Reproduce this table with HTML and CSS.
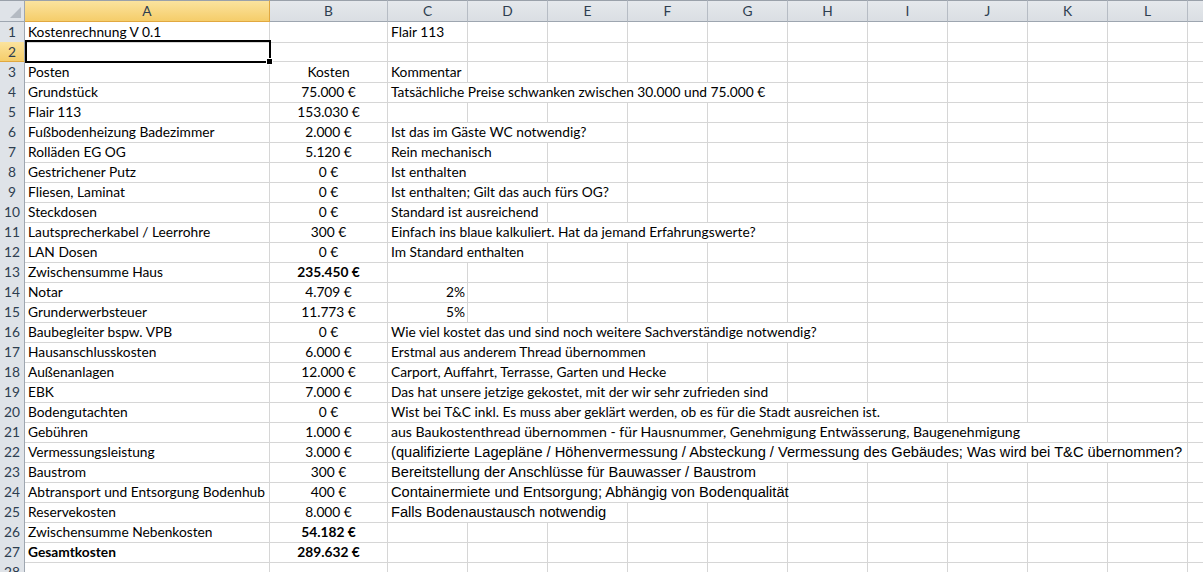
FILE: index.html
```html
<!DOCTYPE html>
<html lang="de">
<head>
<meta charset="utf-8">
<title>Kostenrechnung</title>
<link rel="stylesheet" href="styles.css">
</head>
<body>
<div class="sheet">
  <div class="row hdr">
    <div class="corner"><span class="tri"></span></div>
    <div class="ch sel">A</div><div class="ch">B</div><div class="ch">C</div><div class="ch">D</div><div class="ch">E</div><div class="ch">F</div><div class="ch">G</div><div class="ch">H</div><div class="ch">I</div><div class="ch">J</div><div class="ch">K</div><div class="ch">L</div><div class="ch">M</div>
  </div>

  <div class="row"><div class="rh">1</div><div class="c">Kostenrechnung V 0.1</div><div class="c"></div><div class="c">Flair 113</div><div class="c"></div><div class="c"></div><div class="c"></div><div class="c"></div><div class="c"></div><div class="c"></div><div class="c"></div><div class="c"></div><div class="c"></div><div class="c"></div></div>
  <div class="row"><div class="rh sel">2</div><div class="c active"><span class="selbox"><span class="handle"></span></span></div><div class="c"></div><div class="c"></div><div class="c"></div><div class="c"></div><div class="c"></div><div class="c"></div><div class="c"></div><div class="c"></div><div class="c"></div><div class="c"></div><div class="c"></div><div class="c"></div></div>
  <div class="row"><div class="rh">3</div><div class="c">Posten</div><div class="c num">Kosten</div><div class="c">Kommentar</div><div class="c"></div><div class="c"></div><div class="c"></div><div class="c"></div><div class="c"></div><div class="c"></div><div class="c"></div><div class="c"></div><div class="c"></div><div class="c"></div></div>
  <div class="row"><div class="rh">4</div><div class="c">Grundstück</div><div class="c num">75.000 €</div><div class="c s5">Tatsächliche Preise schwanken zwischen 30.000 und 75.000 €</div><div class="c"></div><div class="c"></div><div class="c"></div><div class="c"></div><div class="c"></div><div class="c"></div></div>
  <div class="row"><div class="rh">5</div><div class="c">Flair 113</div><div class="c num">153.030 €</div><div class="c"></div><div class="c"></div><div class="c"></div><div class="c"></div><div class="c"></div><div class="c"></div><div class="c"></div><div class="c"></div><div class="c"></div><div class="c"></div><div class="c"></div></div>
  <div class="row"><div class="rh">6</div><div class="c">Fußbodenheizung Badezimmer</div><div class="c num">2.000 €</div><div class="c s3">Ist das im Gäste WC notwendig?</div><div class="c"></div><div class="c"></div><div class="c"></div><div class="c"></div><div class="c"></div><div class="c"></div><div class="c"></div><div class="c"></div></div>
  <div class="row"><div class="rh">7</div><div class="c">Rolläden EG OG</div><div class="c num">5.120 €</div><div class="c s2">Rein mechanisch</div><div class="c"></div><div class="c"></div><div class="c"></div><div class="c"></div><div class="c"></div><div class="c"></div><div class="c"></div><div class="c"></div><div class="c"></div></div>
  <div class="row"><div class="rh">8</div><div class="c">Gestrichener Putz</div><div class="c num">0 €</div><div class="c s2">Ist enthalten</div><div class="c"></div><div class="c"></div><div class="c"></div><div class="c"></div><div class="c"></div><div class="c"></div><div class="c"></div><div class="c"></div><div class="c"></div></div>
  <div class="row"><div class="rh">9</div><div class="c">Fliesen, Laminat</div><div class="c num">0 €</div><div class="c s3">Ist enthalten; Gilt das auch fürs OG?</div><div class="c"></div><div class="c"></div><div class="c"></div><div class="c"></div><div class="c"></div><div class="c"></div><div class="c"></div><div class="c"></div></div>
  <div class="row"><div class="rh">10</div><div class="c">Steckdosen</div><div class="c num">0 €</div><div class="c s2">Standard ist ausreichend</div><div class="c"></div><div class="c"></div><div class="c"></div><div class="c"></div><div class="c"></div><div class="c"></div><div class="c"></div><div class="c"></div><div class="c"></div></div>
  <div class="row"><div class="rh">11</div><div class="c">Lautsprecherkabel / Leerrohre</div><div class="c num">300 €</div><div class="c s5">Einfach ins blaue kalkuliert. Hat da jemand Erfahrungswerte?</div><div class="c"></div><div class="c"></div><div class="c"></div><div class="c"></div><div class="c"></div><div class="c"></div></div>
  <div class="row"><div class="rh">12</div><div class="c">LAN Dosen</div><div class="c num">0 €</div><div class="c s2">Im Standard enthalten</div><div class="c"></div><div class="c"></div><div class="c"></div><div class="c"></div><div class="c"></div><div class="c"></div><div class="c"></div><div class="c"></div><div class="c"></div></div>
  <div class="row"><div class="rh">13</div><div class="c">Zwischensumme Haus</div><div class="c num bold">235.450 €</div><div class="c"></div><div class="c"></div><div class="c"></div><div class="c"></div><div class="c"></div><div class="c"></div><div class="c"></div><div class="c"></div><div class="c"></div><div class="c"></div><div class="c"></div></div>
  <div class="row"><div class="rh">14</div><div class="c">Notar</div><div class="c num">4.709 €</div><div class="c right">2%</div><div class="c"></div><div class="c"></div><div class="c"></div><div class="c"></div><div class="c"></div><div class="c"></div><div class="c"></div><div class="c"></div><div class="c"></div><div class="c"></div></div>
  <div class="row"><div class="rh">15</div><div class="c">Grunderwerbsteuer</div><div class="c num">11.773 €</div><div class="c right">5%</div><div class="c"></div><div class="c"></div><div class="c"></div><div class="c"></div><div class="c"></div><div class="c"></div><div class="c"></div><div class="c"></div><div class="c"></div><div class="c"></div></div>
  <div class="row"><div class="rh">16</div><div class="c">Baubegleiter bspw. VPB</div><div class="c num">0 €</div><div class="c s6">Wie viel kostet das und sind noch weitere Sachverständige notwendig?</div><div class="c"></div><div class="c"></div><div class="c"></div><div class="c"></div><div class="c"></div></div>
  <div class="row"><div class="rh">17</div><div class="c">Hausanschlusskosten</div><div class="c num">6.000 €</div><div class="c s4">Erstmal aus anderem Thread übernommen</div><div class="c"></div><div class="c"></div><div class="c"></div><div class="c"></div><div class="c"></div><div class="c"></div><div class="c"></div></div>
  <div class="row"><div class="rh">18</div><div class="c">Außenanlagen</div><div class="c num">12.000 €</div><div class="c s4">Carport, Auffahrt, Terrasse, Garten und Hecke</div><div class="c"></div><div class="c"></div><div class="c"></div><div class="c"></div><div class="c"></div><div class="c"></div><div class="c"></div></div>
  <div class="row"><div class="rh">19</div><div class="c">EBK</div><div class="c num">7.000 €</div><div class="c s5">Das hat unsere jetzige gekostet, mit der wir sehr zufrieden sind</div><div class="c"></div><div class="c"></div><div class="c"></div><div class="c"></div><div class="c"></div><div class="c"></div></div>
  <div class="row"><div class="rh">20</div><div class="c">Bodengutachten</div><div class="c num">0 €</div><div class="c s7">Wist bei T&amp;C inkl. Es muss aber geklärt werden, ob es für die Stadt ausreichen ist.</div><div class="c"></div><div class="c"></div><div class="c"></div><div class="c"></div></div>
  <div class="row"><div class="rh">21</div><div class="c">Gebühren</div><div class="c num">1.000 €</div><div class="c s9 small">aus Baukostenthread übernommen - für Hausnummer, Genehmigung Entwässerung, Baugenehmigung</div><div class="c"></div><div class="c"></div></div>
  <div class="row"><div class="rh">22</div><div class="c">Vermessungsleistung</div><div class="c num">3.000 €</div><div class="c s10 arial">(qualifizierte Lagepläne / Höhenvermessung / Absteckung / Vermessung des Gebäudes; Was wird bei T&amp;C übernommen?</div><div class="c"></div></div>
  <div class="row"><div class="rh">23</div><div class="c">Baustrom</div><div class="c num">300 €</div><div class="c s5 arial">Bereitstellung der Anschlüsse für Bauwasser / Baustrom</div><div class="c"></div><div class="c"></div><div class="c"></div><div class="c"></div><div class="c"></div><div class="c"></div></div>
  <div class="row"><div class="rh">24</div><div class="c">Abtransport und Entsorgung Bodenhub</div><div class="c num">400 €</div><div class="c s5 arial">Containermiete und Entsorgung; Abhängig von Bodenqualität</div><div class="c"></div><div class="c"></div><div class="c"></div><div class="c"></div><div class="c"></div><div class="c"></div></div>
  <div class="row"><div class="rh">25</div><div class="c">Reservekosten</div><div class="c num">8.000 €</div><div class="c s3 arial">Falls Bodenaustausch notwendig</div><div class="c"></div><div class="c"></div><div class="c"></div><div class="c"></div><div class="c"></div><div class="c"></div><div class="c"></div><div class="c"></div></div>
  <div class="row"><div class="rh">26</div><div class="c">Zwischensumme Nebenkosten</div><div class="c num bold">54.182 €</div><div class="c"></div><div class="c"></div><div class="c"></div><div class="c"></div><div class="c"></div><div class="c"></div><div class="c"></div><div class="c"></div><div class="c"></div><div class="c"></div><div class="c"></div></div>
  <div class="row"><div class="rh">27</div><div class="c bold">Gesamtkosten</div><div class="c num bold">289.632 €</div><div class="c"></div><div class="c"></div><div class="c"></div><div class="c"></div><div class="c"></div><div class="c"></div><div class="c"></div><div class="c"></div><div class="c"></div><div class="c"></div><div class="c"></div></div>
  <div class="row"><div class="rh">28</div><div class="c"></div><div class="c"></div><div class="c"></div><div class="c"></div><div class="c"></div><div class="c"></div><div class="c"></div><div class="c"></div><div class="c"></div><div class="c"></div><div class="c"></div><div class="c"></div><div class="c"></div></div>
</div>
</body>
</html>
```

FILE: styles.css
```css
html, body {
  margin: 0;
  padding: 0;
  background: #ffffff;
  overflow: hidden;
}

.sheet {
  width: 1203px;
  height: 572px;
  overflow: hidden;
  font-family: "Lato", "Liberation Sans", sans-serif;
  font-size: 13.75px;
  color: #000000;
}

.row {
  display: grid;
  grid-template-columns: 25px 245px 118px repeat(11, 80px);
  height: 20px;
}

.row.hdr {
  height: 22px;
}

.corner {
  position: relative;
  background: #dfe3e8;
  border-right: 1px solid #9ea6b0;
  border-bottom: 1px solid #9ea6b0;
  border-top: 1px solid #9aa1aa;
  box-sizing: border-box;
}

.tri {
  position: absolute;
  right: 3px;
  bottom: 3px;
  width: 0;
  height: 0;
  border-left: 11px solid transparent;
  border-bottom: 11px solid #b4bac2;
}

.ch {
  box-sizing: border-box;
  background: linear-gradient(#e5e8ec, #dadee3);
  border-top: 1px solid #9aa1aa;
  border-right: 1px solid #b6bcc4;
  border-bottom: 1px solid #9ea6b0;
  text-align: center;
  line-height: 20px;
  color: #2d3e50;
  font-size: 13.75px;
}

.ch.sel {
  background: linear-gradient(#fbe39e, #f5cd6a);
  border-right-color: #e1a840;
  border-bottom-color: #e1a840;
}

.rh {
  box-sizing: border-box;
  background: #dfe3e8;
  border-right: 1px solid #9ea6b0;
  border-bottom: 1px solid #c5cad1;
  text-align: center;
  line-height: 19px;
  color: #2d3e50;
  font-size: 13.75px;
}

.rh.sel {
  background: linear-gradient(#fbe39e, #f5cd6a);
  border-bottom-color: #e1a840;
}

.c {
  position: relative;
  box-sizing: border-box;
  border-right: 1px solid #d6d6d6;
  border-bottom: 1px solid #d6d6d6;
  padding-left: 3px;
  line-height: 20px;
  white-space: nowrap;
  overflow: visible;
}

.c.num {
  text-align: center;
  padding-left: 0;
}

.c.right {
  text-align: right;
  padding-left: 0;
  padding-right: 2px;
}

.bold {
  font-weight: bold;
}

.s2 { grid-column: span 2; }
.s3 { grid-column: span 3; }
.s4 { grid-column: span 4; }
.s5 { grid-column: span 5; }
.s6 { grid-column: span 6; }
.s7 { grid-column: span 7; }
.s9 { grid-column: span 9; }
.s10 { grid-column: span 10; }

.small {
  font-size: 14.1px;
}

.arial {
  font-family: "Liberation Sans", Arial, sans-serif;
  font-size: 14.67px;
}

.selbox {
  position: absolute;
  left: 0;
  top: -2px;
  right: -2px;
  bottom: -2px;
  border: 2px solid #000000;
  z-index: 2;
}

.handle {
  position: absolute;
  right: -4px;
  bottom: -4px;
  width: 5px;
  height: 5px;
  background: #000000;
  border: 1px solid #ffffff;
}
```
